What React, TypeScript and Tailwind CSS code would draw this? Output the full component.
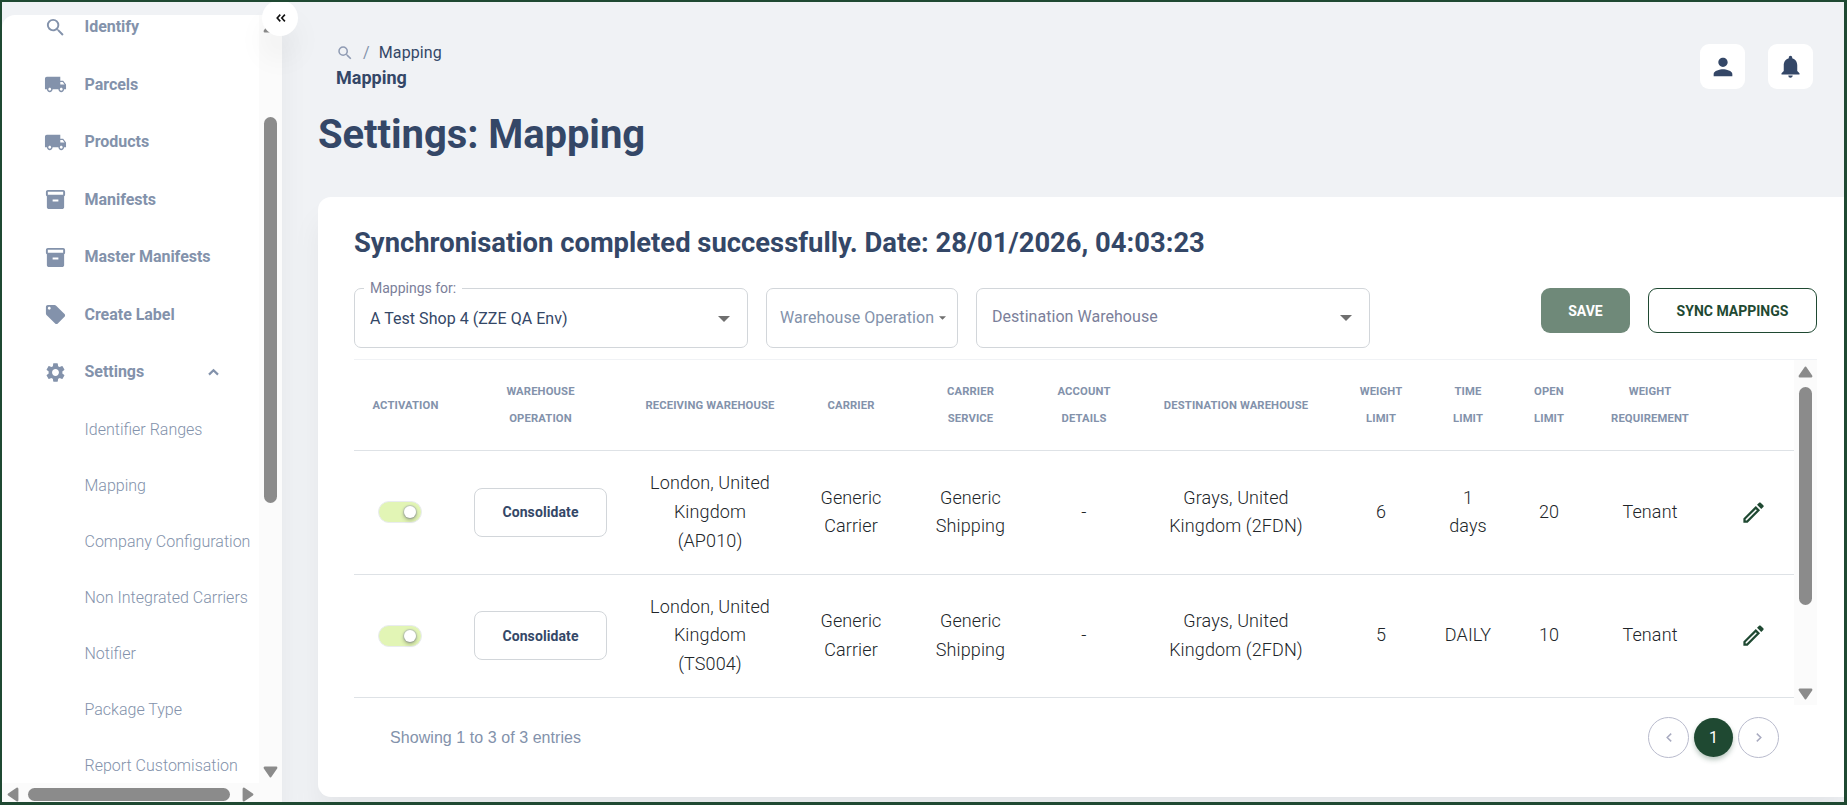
import type { ReactNode } from "react";
import {
  MdInventory2,
  MdLocalOffer,
  MdLocalShipping,
  MdNotifications,
  MdOutlineEdit,
  MdPerson,
  MdSearch,
  MdSettings,
} from "react-icons/md";

const navItems: { label: string; icon: ReactNode; open?: boolean }[] = [
  { label: "Identify", icon: <MdSearch size={23} /> },
  { label: "Parcels", icon: <MdLocalShipping size={23} /> },
  { label: "Products", icon: <MdLocalShipping size={23} /> },
  { label: "Manifests", icon: <MdInventory2 size={23} /> },
  { label: "Master Manifests", icon: <MdInventory2 size={23} /> },
  { label: "Create Label", icon: <MdLocalOffer size={23} /> },
  { label: "Settings", icon: <MdSettings size={23} />, open: true },
];

const subItems = [
  "Identifier Ranges",
  "Mapping",
  "Company Configuration",
  "Non Integrated Carriers",
  "Notifier",
  "Package Type",
  "Report Customisation",
];

const columns: string[][] = [
  ["ACTIVATION"],
  ["WAREHOUSE", "OPERATION"],
  ["RECEIVING WAREHOUSE"],
  ["CARRIER"],
  ["CARRIER", "SERVICE"],
  ["ACCOUNT", "DETAILS"],
  ["DESTINATION WAREHOUSE"],
  ["WEIGHT", "LIMIT"],
  ["TIME", "LIMIT"],
  ["OPEN", "LIMIT"],
  ["WEIGHT", "REQUIREMENT"],
  [],
];

const rows: { code: string; cells: string[][] }[] = [
  {
    code: "AP010",
    cells: [
      ["London, United", "Kingdom", "(AP010)"],
      ["Generic", "Carrier"],
      ["Generic", "Shipping"],
      ["-"],
      ["Grays, United", "Kingdom (2FDN)"],
      ["6"],
      ["1", "days"],
      ["20"],
      ["Tenant"],
    ],
  },
  {
    code: "TS004",
    cells: [
      ["London, United", "Kingdom", "(TS004)"],
      ["Generic", "Carrier"],
      ["Generic", "Shipping"],
      ["-"],
      ["Grays, United", "Kingdom (2FDN)"],
      ["5"],
      ["DAILY"],
      ["10"],
      ["Tenant"],
    ],
  },
];

const gridCols =
  "grid grid-cols-[103px_167px_172px_110px_129px_98px_206px_84px_90px_72px_130px_79px] items-center";

type Direction = "up" | "down" | "left" | "right";

const arrowPaths: Record<Direction, string> = {
  up: "M7.5 1.8 13.2 10.2H1.8Z",
  down: "M7.5 10.2 1.8 1.8H13.2Z",
  left: "M1.8 7.5 10.2 1.8V13.2Z",
  right: "M10.2 7.5 1.8 1.8V13.2Z",
};

function ScrollArrow({ dir }: { dir: Direction }) {
  const vertical = dir === "up" || dir === "down";
  return (
    <svg
      className="shrink-0"
      width={vertical ? 15 : 12}
      height={vertical ? 12 : 15}
      fill="#8b8b8b"
      stroke="#8b8b8b"
      strokeWidth="2.4"
      strokeLinejoin="round"
    >
      <path d={arrowPaths[dir]} />
    </svg>
  );
}

function Caret({ small }: { small?: boolean }) {
  return (
    <svg width={small ? 7 : 12} height={small ? 4 : 6} viewBox="0 0 12 6" fill="#6f6f6f">
      <path d="M0 0H12L6 6Z" />
    </svg>
  );
}

function Chevron({ dir }: { dir: "left" | "right" }) {
  return (
    <svg width="6" height="9" fill="none" stroke="#a9abc0" strokeWidth="1.5">
      <path d={dir === "left" ? "M5.2 .6 1.2 4.5 5.2 8.4" : "M.8 .6 4.8 4.5 .8 8.4"} />
    </svg>
  );
}

function Sidebar() {
  return (
    <aside className="relative mt-[13px] flex h-[787px] w-[280px] shrink-0 flex-col rounded-tl-[13px] bg-white shadow-[0_22px_30px_rgba(0,0,0,0.05)]">
      <div className="flex h-[768px]">
        <nav className="h-[768px] w-[257px] overflow-hidden rounded-tl-[13px] text-[#8392ab]">
          <div className="-mt-[16.5px]">
            {navItems.map((item) => (
              <div key={item.label} className="flex h-[57.5px] items-center pl-[42px]">
                <span className="flex w-[40.5px]">{item.icon}</span>
                <span className="w-[123px] whitespace-nowrap text-base font-bold tracking-[-0.03px]">
                  {item.label}
                </span>
                {item.open && (
                  <svg width="11" height="8" fill="none" stroke="currentColor" strokeWidth="2.2">
                    <path d="M1 6.6 5.5 2.2 10 6.6" />
                  </svg>
                )}
              </div>
            ))}
            {subItems.map((label) => (
              <div
                key={label}
                className="flex h-14 items-center whitespace-nowrap pl-[82.5px] pt-[1px] text-base font-light"
              >
                {label}
              </div>
            ))}
          </div>
        </nav>
        <div className="flex w-[23px] flex-col items-center bg-[#fbfbfb] pb-[5px] pt-[6px]">
          <ScrollArrow dir="up" />
          <div className="mt-[84px] h-[386px] w-[13px] rounded-full bg-[#8b8b8b]" />
          <div className="flex-1" />
          <ScrollArrow dir="down" />
        </div>
      </div>
      <div className="flex h-[19px] items-center bg-[#fbfbfb] pl-[5px] pt-[3px]">
        <ScrollArrow dir="left" />
        <div className="ml-[9px] h-[13px] w-[202px] rounded-full bg-[#8b8b8b]" />
        <div className="w-3" />
        <ScrollArrow dir="right" />
      </div>
      <button className="absolute -top-[15px] left-[260px] z-10 flex size-9 items-center justify-center rounded-full bg-white pl-[2px] shadow-[0_22px_30px_rgba(0,0,0,0.05)]">
        <svg width="10" height="8" fill="none" stroke="#111" strokeWidth="1.6">
          <path d="M4.3 .6 1.2 4 4.3 7.4M8.9 .6 5.8 4 8.9 7.4" />
        </svg>
      </button>
    </aside>
  );
}

function Toolbar() {
  return (
    <div className="flex h-[60px] items-start">
      <fieldset className="-mt-[10px] h-[70px] w-[394px] rounded-[7px] border border-[#d2d6da] pl-[15px] pr-[17px]">
        <legend className="-ml-[6px] h-5 px-1.5 text-sm leading-5 text-[#7b809a]">Mappings for:</legend>
        <div className="flex h-[41px] items-center justify-between">
          <span className="pt-[1px] text-base tracking-[0.04px] text-[#344767]">A Test Shop 4 (ZZE QA Env)</span>
          <Caret />
        </div>
      </fieldset>
      <div className="ml-[18px] flex h-[60px] w-[192px] items-center rounded-[7px] border border-[#d2d6da] pl-[13px]">
        <span className="whitespace-nowrap text-base tracking-[0.04px] text-[#8392ab]">Warehouse Operation</span>
        <span className="ml-[5px]">
          <Caret small />
        </span>
      </div>
      <div className="ml-[18px] flex h-[60px] w-[394px] items-center justify-between rounded-[7px] border border-[#d2d6da] pl-[15px] pr-[17px]">
        <span className="pb-[3px] text-base tracking-[0.04px] text-[#7b809a]">Destination Warehouse</span>
        <Caret />
      </div>
      <button className="ml-auto h-[45px] w-[89px] rounded-[9px] bg-[#6f8979] text-sm font-bold text-white">
        SAVE
      </button>
      <button className="ml-[18px] h-[45px] w-[169px] rounded-[9px] border border-[#1f4932] text-sm font-bold text-[#1f4932]">
        SYNC MAPPINGS
      </button>
    </div>
  );
}

function MappingTable() {
  return (
    <div className="mt-[11px] flex h-[346px] border-t border-[#f0f2f5]">
      <div className="w-[1440px]">
        <div className={`${gridCols} h-[91px] border-b border-[#dee2e6]`}>
          {columns.map((lines, i) => (
            <div
              key={i}
              className="whitespace-nowrap text-center text-[11.25px] font-bold leading-[27px] tracking-[0.13px] text-[#8392ab]"
            >
              {lines.map((line) => (
                <div key={line}>{line}</div>
              ))}
            </div>
          ))}
        </div>
        {rows.map((row) => (
          <div key={row.code} className={`${gridCols} h-[123.5px] border-b border-[#dee2e6]`}>
            <div className="flex justify-center pr-[12px]">
              <div className="flex h-[22px] w-[44px] items-center justify-end rounded-full border border-[#e9ecef] bg-[#e2f5b5] pr-[5px]">
                <div className="size-[12px] rounded-full bg-white shadow-[0_2px_4px_rgba(0,0,0,0.3),0_0_1px_1px_rgba(160,165,190,0.5)]" />
              </div>
            </div>
            <div className="flex justify-center">
              <button className="h-[49px] w-[133px] rounded-[8px] border border-[#d2d6da] text-sm font-bold tracking-[0.1px] text-[#344767]">
                Consolidate
              </button>
            </div>
            {row.cells.map((lines, i) => (
              <div
                key={i}
                className="whitespace-nowrap text-center text-[18px] font-light leading-[28.6px] tracking-[0.12px] text-[#212529]"
              >
                {lines.map((line) => (
                  <div key={line}>{line}</div>
                ))}
              </div>
            ))}
            <div className="flex justify-center pr-[2px] text-[#1f4932]">
              <MdOutlineEdit size={27} />
            </div>
          </div>
        ))}
      </div>
      <div className="flex w-[23px] flex-col items-center bg-[#fbfbfb] pb-[5px] pt-[6px]">
        <ScrollArrow dir="up" />
        <div className="mt-[9px] h-[218px] w-[13px] rounded-full bg-[#8b8b8b]" />
        <div className="flex-1" />
        <ScrollArrow dir="down" />
      </div>
    </div>
  );
}

function Pagination() {
  return (
    <div className="flex items-center pl-[36px] pr-[38px] pt-[12px]">
      <span className="font-['Liberation_Sans',sans-serif] text-base tracking-[0.06px] text-[#8392ab]">
        Showing 1 to 3 of 3 entries
      </span>
      <div className="ml-auto flex items-center gap-[5px]">
        <button className="flex size-[41px] items-center justify-center rounded-full border border-[#b9bbcd]">
          <Chevron dir="left" />
        </button>
        <button className="size-[39px] rounded-full bg-[#1f4932] text-base text-white shadow-[0_3px_5px_rgba(31,73,50,0.3)]">
          1
        </button>
        <button className="flex size-[41px] items-center justify-center rounded-full border border-[#b9bbcd]">
          <Chevron dir="right" />
        </button>
      </div>
    </div>
  );
}

function Header() {
  return (
    <header className="flex h-[195px] flex-col">
      <div className="flex justify-between pl-[54px] pr-[31px] pt-[37px] text-[#344767]">
        <div>
          <div className="flex h-[26px] items-center pt-[1px] text-base tracking-[0.12px]">
            <MdSearch size={18} className="text-[#8f9bb3]" />
            <span className="ml-[9px] text-[#8392ab]">/</span>
            <span className="ml-[9px]">Mapping</span>
          </div>
          <div className="text-[18px] font-bold leading-[26px]">Mapping</div>
        </div>
        <div className="flex gap-[23px] pt-[5px]">
          <button className="flex size-[45px] items-center justify-center rounded-[9px] bg-white">
            <MdPerson size={28} />
          </button>
          <button className="flex size-[45px] items-center justify-center rounded-[9px] bg-white">
            <MdNotifications size={27} />
          </button>
        </div>
      </div>
      <h1 className="mt-[16px] pl-[36px] text-[40px] font-bold leading-[56px] tracking-[-0.07px] text-[#344767]">
        Settings: Mapping
      </h1>
    </header>
  );
}

export default function App() {
  return (
    <div className="flex h-[805px] w-[1847px] overflow-hidden border-b-[3px] border-l-2 border-r-[3px] border-t-2 border-[#1f4932] bg-[#f0f2f5] font-[Roboto,sans-serif]">
      <div className="z-10">
        <Sidebar />
      </div>
      <main className="h-[800px] min-w-0 flex-1">
        <Header />
        <section className="ml-[36px] h-[600px] rounded-l-[13px] bg-white pl-[36px] pr-[27px] pt-[26px] shadow-[0_22px_30px_rgba(0,0,0,0.05)]">
          <h2 className="h-[65px] text-[27.4px] font-bold leading-[40px] text-[#344767]">
            Synchronisation completed successfully. Date: 28/01/2026, 04:03:23
          </h2>
          <Toolbar />
          <MappingTable />
          <Pagination />
        </section>
      </main>
    </div>
  );
}
